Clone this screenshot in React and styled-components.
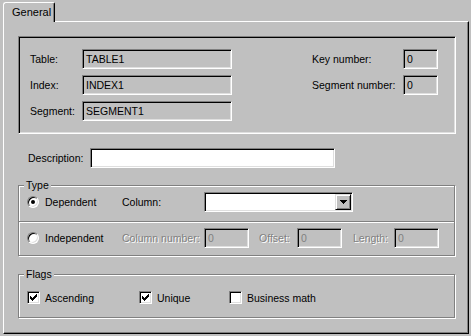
import React from 'react';
import styled, { createGlobalStyle } from 'styled-components';

const GlobalStyle = createGlobalStyle`
  html, body {
    margin: 0;
    padding: 0;
    background: #c0c0c0;
  }
  body {
    font-family: "Liberation Sans", Arial, sans-serif;
    font-size: 10.5px;
    color: #000;
  }
`;

const Window = styled.div`
  width: 471px;
  height: 336px;
  box-sizing: border-box;
  padding: 2px 0 0 3px;
`;

const TabStrip = styled.div`
  display: flex;
  height: 19px;
  position: relative;
  z-index: 1;
`;

const Tab = styled.div`
  box-sizing: border-box;
  width: 52px;
  height: 20px;
  padding: 0 0 2px 8px;
  display: flex;
  align-items: center;
  font-size: 11px;
  background: #c0c0c0;
  border-top: 1px solid #fff;
  border-left: 1px solid #fff;
  border-right: 1px solid #000;
  border-radius: 3px 2px 0 0;
  box-shadow: inset -1px 0 0 #808080;
`;

const Panel = styled.div`
  box-sizing: border-box;
  width: 466px;
  height: 313px;
  border-top: 1px solid #fff;
  border-left: 1px solid #fff;
  border-right: 1px solid #000;
  border-bottom: 1px solid #000;
  box-shadow: inset -1px -1px 0 #808080;
  padding: 14px 12px 0 14px;
  display: flex;
  flex-direction: column;
`;

// sunken 3d frame used by the info box and every edit field
const sunken = `
  border: 1px solid;
  border-color: #808080 #fff #fff #808080;
  box-shadow: inset 1px 1px 0 #000, inset -1px -1px 0 #dfdfdf;
`;

const InfoBox = styled.div`
  box-sizing: border-box;
  width: 438px;
  height: 98px;
  ${sunken}
  padding: 12px 0 0 11px;
  display: grid;
  grid-template-columns: 52px 150px 80px 91px 35px;
  grid-auto-rows: 20px;
  row-gap: 6px;
`;

const Label = styled.span`
  display: flex;
  align-items: center;
  white-space: nowrap;
  flex: none;
  width: ${p => (p.$w ? `${p.$w}px` : 'auto')};
  grid-column: ${p => p.$col || 'auto'};
  color: ${p => (p.$disabled ? '#808080' : '#000')};
  text-shadow: ${p => (p.$disabled ? '1px 1px 0 #fff' : 'none')};
`;

const TextBox = styled.div`
  box-sizing: border-box;
  flex: none;
  height: 20px;
  width: ${p => (p.$w ? `${p.$w}px` : '100%')};
  ${sunken}
  background: ${p => (p.$white ? '#fff' : '#c0c0c0')};
  color: ${p => (p.$disabled ? '#808080' : '#000')};
  padding: 0 3px;
  display: flex;
  align-items: center;
  white-space: nowrap;
`;

const DescRow = styled.div`
  display: flex;
  align-items: center;
  height: 20px;
  margin-top: 14px;
  padding-left: 10px;
`;

const Group = styled.div`
  position: relative;
  box-sizing: border-box;
  width: 437px;
  height: ${p => p.$h}px;
  margin-top: ${p => p.$mt}px;
  border: 1px solid #808080;
  box-shadow: inset 1px 1px 0 #fff, 1px 1px 0 #fff;
`;

const GroupTitle = styled.span`
  position: absolute;
  top: -7px;
  left: 5px;
  padding: 0 2px;
  line-height: 13px;
  background: #c0c0c0;
`;

const Row = styled.div`
  display: flex;
  align-items: center;
  height: ${p => p.$h || 20}px;
  margin-top: ${p => p.$mt}px;
  padding-left: 8px;
`;

const Divider = styled.div`
  height: 0;
  margin-top: 9px;
  border-top: 1px solid #808080;
  border-bottom: 1px solid #fff;
`;

const Option = styled.label`
  display: flex;
  align-items: center;
  gap: ${p => p.$gap}px;
  width: ${p => p.$w}px;
  flex: none;
  white-space: nowrap;
`;

const Radio = styled.span`
  position: relative;
  box-sizing: border-box;
  width: 12px;
  height: 12px;
  flex: none;
  border-radius: 50%;
  border: 1px solid;
  border-color: #808080 #fff #fff #808080;
  box-shadow: inset 1px 1px 0 #000, inset -1px -1px 0 #dfdfdf;
  background: #fff;
  &::after {
    content: '';
    display: ${p => (p.$checked ? 'block' : 'none')};
    position: absolute;
    left: 3px;
    top: 3px;
    width: 4px;
    height: 4px;
    border-radius: 50%;
    background: #000;
  }
`;

const CheckBox = styled.span`
  box-sizing: border-box;
  width: 13px;
  height: 13px;
  flex: none;
  ${sunken}
  background: #fff;
  display: flex;
  align-items: center;
  justify-content: center;
`;

const Combo = styled.div`
  box-sizing: border-box;
  width: 149px;
  height: 20px;
  flex: none;
  ${sunken}
  background: #fff;
  padding: 1px;
  display: flex;
  justify-content: flex-end;
`;

const DropButton = styled.span`
  box-sizing: border-box;
  width: 16px;
  height: 16px;
  background: #c0c0c0;
  border: 1px solid;
  border-color: #dfdfdf #000 #000 #dfdfdf;
  box-shadow: inset 1px 1px 0 #fff, inset -1px -1px 0 #808080;
  display: flex;
  align-items: center;
  justify-content: center;
`;

const Gap = styled.span`
  width: ${p => p.$w}px;
  flex: none;
`;

const CheckMark = () => (
  <svg width="7" height="7" viewBox="0 0 7 7" shapeRendering="crispEdges">
    <path
      d="M0 2h1v3h-1z M1 3h1v3h-1z M2 4h1v3h-1z M3 3h1v3h-1z M4 2h1v3h-1z M5 1h1v3h-1z M6 0h1v3h-1z"
      fill="#000"
    />
  </svg>
);

const DownArrow = () => (
  <svg width="7" height="4" viewBox="0 0 7 4" shapeRendering="crispEdges">
    <path d="M0 0h7v1h-7z M1 1h5v1h-5z M2 2h3v1h-3z M3 3h1v1h-1z" fill="#000" />
  </svg>
);

const App = () => (
  <Window>
    <GlobalStyle />
    <TabStrip>
      <Tab>General</Tab>
    </TabStrip>
    <Panel>
      <InfoBox>
        <Label>Table:</Label>
        <TextBox>TABLE1</TextBox>
        <Label $col={4}>Key number:</Label>
        <TextBox>0</TextBox>
        <Label>Index:</Label>
        <TextBox>INDEX1</TextBox>
        <Label $col={4}>Segment number:</Label>
        <TextBox>0</TextBox>
        <Label>Segment:</Label>
        <TextBox>SEGMENT1</TextBox>
      </InfoBox>

      <DescRow>
        <Label $w={62}>Description:</Label>
        <TextBox $w={245} $white />
      </DescRow>

      <Group $h={71} $mt={17}>
        <GroupTitle>Type</GroupTitle>
        <Row $mt={6}>
          <Option $w={95} $gap={6}>
            <Radio $checked />
            Dependent
          </Option>
          <Label $w={82}>Column:</Label>
          <Combo>
            <DropButton>
              <DownArrow />
            </DropButton>
          </Combo>
        </Row>
        <Divider />
        <Row $mt={5}>
          <Option $w={95} $gap={6}>
            <Radio />
            Independent
          </Option>
          <Label $w={82} $disabled>Column number:</Label>
          <TextBox $w={45} $disabled>0</TextBox>
          <Gap $w={10} />
          <Label $w={38} $disabled>Offset:</Label>
          <TextBox $w={45} $disabled>0</TextBox>
          <Gap $w={11} />
          <Label $w={41} $disabled>Length:</Label>
          <TextBox $w={45} $disabled>0</TextBox>
        </Row>
      </Group>

      <Group $h={44} $mt={18}>
        <GroupTitle>Flags</GroupTitle>
        <Row $h={13} $mt={16}>
          <Option $w={112} $gap={5}>
            <CheckBox>
              <CheckMark />
            </CheckBox>
            Ascending
          </Option>
          <Option $w={90} $gap={5}>
            <CheckBox>
              <CheckMark />
            </CheckBox>
            Unique
          </Option>
          <Option $w={120} $gap={5}>
            <CheckBox />
            Business math
          </Option>
        </Row>
      </Group>
    </Panel>
  </Window>
);

export default App;
